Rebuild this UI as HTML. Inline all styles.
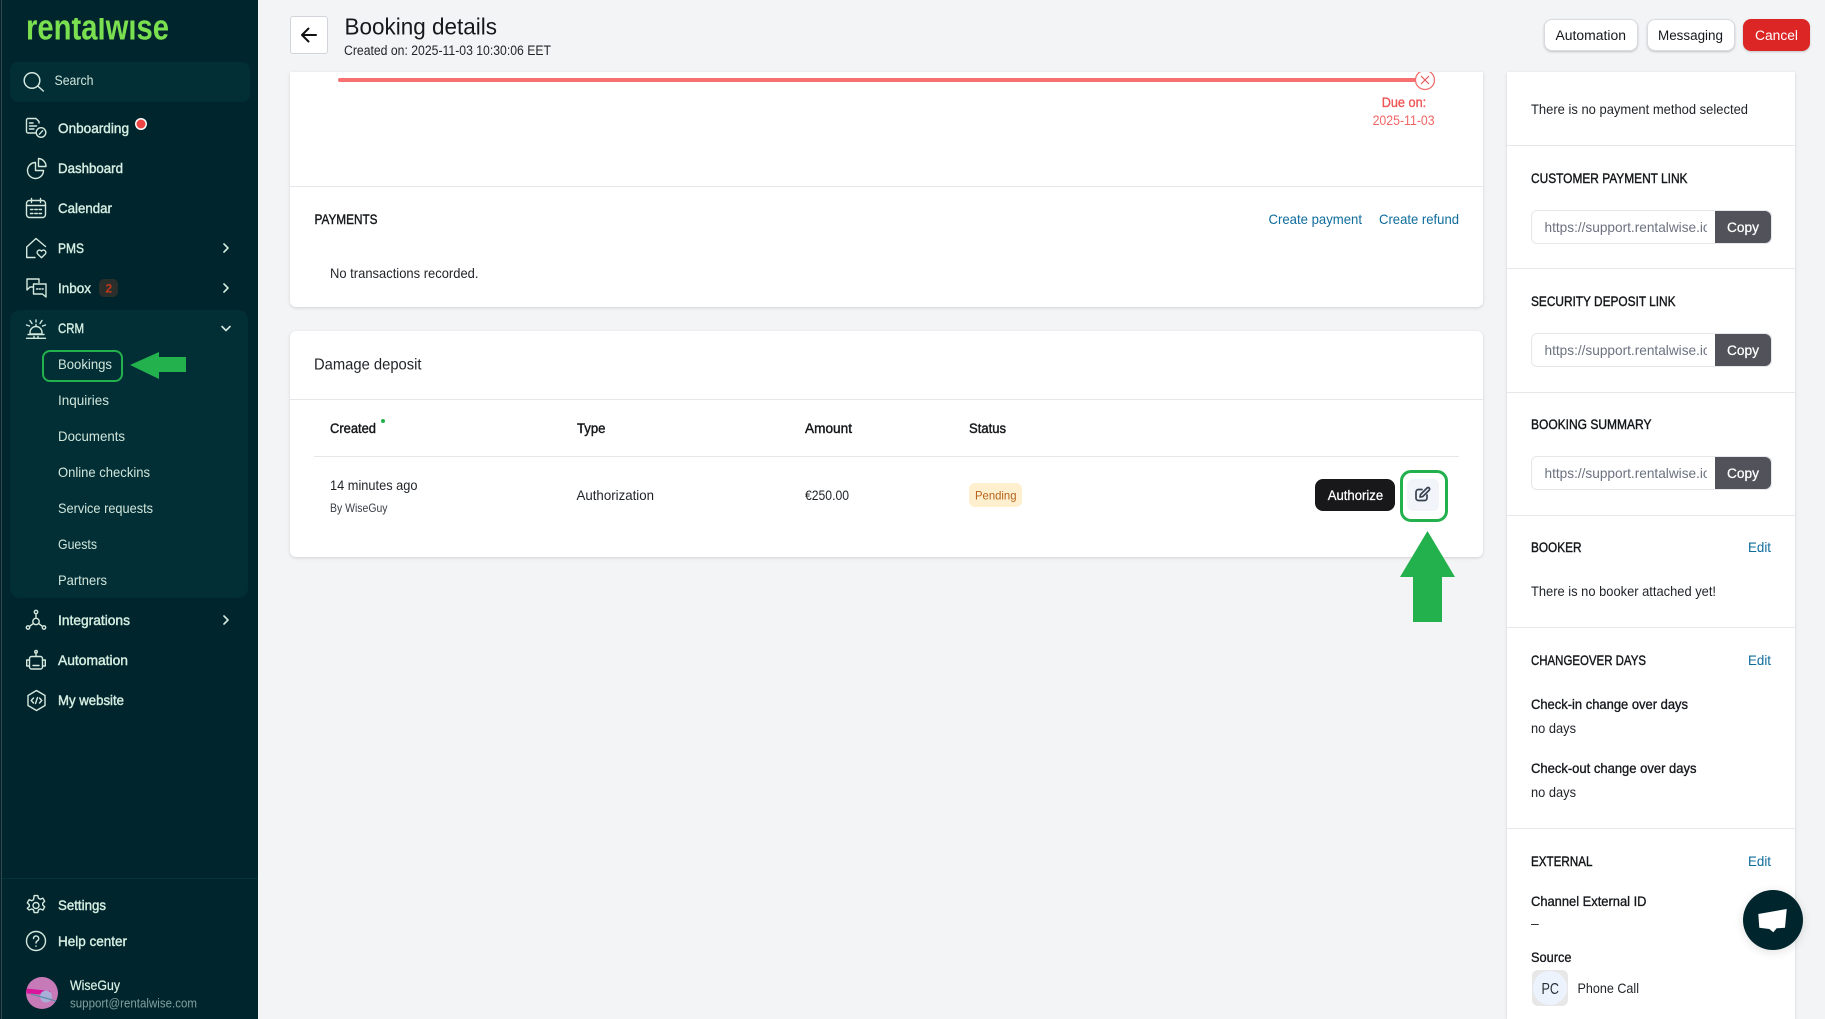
<!DOCTYPE html>
<html lang="en">
<head>
<meta charset="utf-8">
<title>Booking details</title>
<style>
html,body{margin:0;padding:0;width:1825px;height:1019px;overflow:hidden;background:#f3f4f6;font-family:"Liberation Sans",sans-serif}
div{position:absolute;box-sizing:border-box}
svg.layer{position:absolute;left:0;top:0}
text{font-family:"Liberation Sans",sans-serif}
.n{font-size:14px;fill:#d6efe2;stroke:#d6efe2;stroke-width:.4}
.s{font-size:14px;fill:#d0e6da}
.t{font-size:14px;fill:#1f2328}
.b{font-size:14px;fill:#15181c;stroke:#15181c;stroke-width:.35}
.h{font-size:13.5px;fill:#14171a;stroke:#14171a;stroke-width:.4}
.l{font-size:14px;fill:#0f6c9c}
.i{fill:none;stroke:#d5e8dd;stroke-width:1.4;stroke-linecap:round;stroke-linejoin:round}
.c{font-size:13.5px;fill:#15181c}
.w{font-size:13.5px;fill:#fff;stroke:#fff;stroke-width:.25}
</style>
</head>
<body>
<!-- sidebar -->
<div style="left:0;top:0;width:258px;height:1019px;background:#00252d"></div>
<div style="left:1px;top:0;width:1px;height:1019px;background:#34474d"></div>
<div style="left:10px;top:62px;width:240px;height:40px;background:#022e36;border-radius:8px"></div>
<div style="left:10px;top:310px;width:238px;height:288px;background:#022e36;border-radius:10px"></div>
<div style="left:2px;top:878px;width:256px;height:1px;background:#04343b"></div>
<div style="left:99px;top:279px;width:19px;height:18px;background:#2a2f2c;border-radius:5px"></div>

<!-- main card -->
<div style="left:290px;top:72px;width:1193px;height:235px;background:#fff;border-radius:0 0 6px 6px;box-shadow:0 1px 3px rgba(0,0,0,.14)"></div>
<div style="left:290px;top:186px;width:1193px;height:1px;background:#e5e7eb"></div>
<div style="left:338px;top:78px;width:1080px;height:4px;background:#f87171;border-radius:2px"></div>

<!-- deposit card -->
<div style="left:290px;top:331px;width:1193px;height:226px;background:#fff;border-radius:6px;box-shadow:0 1px 3px rgba(0,0,0,.14)"></div>
<div style="left:290px;top:399px;width:1193px;height:1px;background:#e5e7eb"></div>
<div style="left:314px;top:456px;width:1145px;height:1px;background:#e5e7eb"></div>
<div style="left:969px;top:483px;width:53px;height:24px;background:#fef0cf;border-radius:6px"></div>
<div style="left:1315px;top:479px;width:80px;height:32px;background:#18181b;border-radius:8px"></div>
<div style="left:1407px;top:479px;width:32px;height:32px;background:#f1f5f9;border-radius:6px"></div>
<div style="left:1400px;top:470px;width:48px;height:52px;border:3px solid #22b14c;border-radius:11px"></div>
<div style="left:42px;top:350px;width:81px;height:32px;border:2.5px solid #22b14c;border-radius:8px"></div>

<!-- right panel -->
<div style="left:1507px;top:72px;width:288px;height:947px;background:#fff;box-shadow:0 1px 3px rgba(0,0,0,.14)"></div>
<div style="left:1507px;top:145px;width:288px;height:1px;background:#e5e7eb"></div>
<div style="left:1507px;top:268px;width:288px;height:1px;background:#e5e7eb"></div>
<div style="left:1507px;top:392px;width:288px;height:1px;background:#e5e7eb"></div>
<div style="left:1507px;top:515px;width:288px;height:1px;background:#e5e7eb"></div>
<div style="left:1507px;top:627px;width:288px;height:1px;background:#e5e7eb"></div>
<div style="left:1507px;top:828px;width:288px;height:1px;background:#e5e7eb"></div>

<div style="left:1531px;top:210px;width:241px;height:34px;background:#fff;border:1px solid #e5e7eb;border-radius:6px"></div>
<div style="left:1715px;top:211px;width:56px;height:32px;background:#52525b;border-radius:0 6px 6px 0"></div>
<div style="left:1531px;top:333px;width:241px;height:34px;background:#fff;border:1px solid #e5e7eb;border-radius:6px"></div>
<div style="left:1715px;top:334px;width:56px;height:32px;background:#52525b;border-radius:0 6px 6px 0"></div>
<div style="left:1531px;top:456px;width:241px;height:34px;background:#fff;border:1px solid #e5e7eb;border-radius:6px"></div>
<div style="left:1715px;top:457px;width:56px;height:32px;background:#52525b;border-radius:0 6px 6px 0"></div>

<div style="left:1532px;top:970px;width:36px;height:36px;background:#e7e7e7;border-radius:6px"></div>
<div style="left:1533px;top:971px;width:34px;height:34px;background:#edf3fd;border-radius:50%"></div>

<!-- header -->
<div style="left:290px;top:16px;width:38px;height:38px;background:#fff;border:1px solid #d1d5db;border-radius:3px"></div>
<div style="left:1544px;top:19px;width:94px;height:32px;background:#fff;border:1px solid #d9dbe0;border-radius:8px;box-shadow:0 1px 2px rgba(0,0,0,.2)"></div>
<div style="left:1647px;top:19px;width:88px;height:32px;background:#fff;border:1px solid #d9dbe0;border-radius:8px;box-shadow:0 1px 2px rgba(0,0,0,.2)"></div>
<div style="left:1743px;top:19px;width:67px;height:32px;background:#dc2626;border-radius:8px;box-shadow:0 1px 2px rgba(0,0,0,.2)"></div>

<!-- chat -->
<div style="left:1743px;top:890px;width:60px;height:60px;background:#00252d;border-radius:50%;box-shadow:0 2px 10px rgba(0,0,0,.12)"></div>

<svg class="layer" width="1825" height="1019" viewBox="0 0 1825 1019" xmlns="http://www.w3.org/2000/svg">
<defs>
<clipPath id="u"><rect x="1540" y="200" width="167" height="300"/></clipPath>
<clipPath id="cc"><rect x="1400" y="72" width="50" height="30"/></clipPath>
<clipPath id="lg"><rect x="20" y="18" width="160" height="24"/></clipPath>
</defs>

<!-- logo -->
<g clip-path="url(#lg)"><text x="26" y="39.500" font-size="36" font-weight="700" fill="#7be050" textLength="143" lengthAdjust="spacingAndGlyphs">rentalwise</text></g>

<!-- search -->
<g class="i" style="stroke-width:1.5"><circle cx="32" cy="80.5" r="7.8"/><path d="M37.8 86l5.5 5"/></g>
<text class="s" x="54.5" y="85" textLength="39" lengthAdjust="spacingAndGlyphs">Search</text>

<!-- nav icons -->
<g class="i" transform="translate(26,118)"><path d="M13 5V3.5L10 .5H2A1.5 1.5 0 0 0 .5 2v11.5A1.5 1.5 0 0 0 2 15h7.5"/><path d="M3.5 5h3.5M3.5 8h7M3.5 11h4.5"/><circle cx="15" cy="14.5" r="4.8"/><path d="M13.4 16.2l3.2-3.4"/></g>
<g class="i" transform="translate(26,158)"><path d="M9.500 4.500A8 8 0 1 0 17.500 12.500H9.500Z"/><path d="M12.500 .5V8.500H20A8 8 0 0 0 12.500 .5Z"/></g>
<g class="i" transform="translate(26,198)"><rect x=".5" y="2.5" width="19" height="17" rx="3"/><path d="M5.5 .5v4M14.5 .5v4M.5 7.5h19M4.5 11.5h2.5M8.8 11.5h2.5M13 11.5h2.5M4.5 15.5h2.5M8.8 15.5h2.5M13 15.5h2.5"/></g>
<g class="i" transform="translate(26,238)"><path d="M9 19.500H.7V9L10 .5 19.500 8.500"/><path d="M15.500 19.700l-3.900-3.800a2.400 2.400 0 0 1 3.900-2.800 2.400 2.400 0 0 1 3.900 2.800z"/></g>
<g class="i" transform="translate(26,278)"><path d="M13 4.500V1H1v11l3-3h3.500"/><path d="M7.500 6H20v13l-3.500-3H7.500Z"/><path d="M10.500 11h1.200M13.200 11h1.200M16 11h1.200"/></g>
<g class="i" transform="translate(26,320)"><path d="M4 14V12.500a6 6 0 0 1 12 0V14Z"/><path d="M2 14.500h16M.5 18.300h19M8 16.500v1.500M12 16.500v1.500M10 6V4.500M4 .5l2 3M10 0v2M16 .5l-2 3M.5 5l3 1M19.500 5l-3 1"/></g>
<g class="i" transform="translate(26,610)"><circle cx="10" cy="11.500" r="3.200"/><circle cx="10" cy="2" r="1.700"/><circle cx="2" cy="17.500" r="1.700"/><circle cx="18" cy="17.500" r="1.700"/><path d="M10 3.700v4.600M7.400 13.400l-3.900 3M12.600 13.400l3.900 3"/></g>
<g class="i" transform="translate(26,650)"><rect x="3.500" y="6.500" width="13" height="12.500" rx="2"/><path d="M3.500 10H.7v6h2.800M16.500 10h2.800v6h-2.800M7 15.500h6M10 6.500V3"/><circle cx="10" cy="1.800" r="1.300"/></g>
<g class="i" transform="translate(27,690)"><path d="M9.500 .5L18 5.500V15.500L9.500 20.500 1 15.500V5.500Z"/><path d="M6.500 8l-2.300 2.500L6.500 13M12.500 8l2.300 2.500L12.500 13M10.500 7.500l-2 6"/></g>
<g class="i" transform="translate(26,895)"><path d="M8.200 .6h3.600l.7 2.700 1.800.9 2.600-1 1.800 3.100-2 1.900v1.800l2 1.900-1.800 3.100-2.600-1-1.800.9-.7 2.700H8.200l-.7-2.700-1.800-.9-2.600 1L1.300 13.400l2-1.900V9.700l-2-1.900L3.100 4.700l2.600 1 1.800-.9Z"/><circle cx="10" cy="10.500" r="3"/></g>
<g class="i" transform="translate(26,931)"><circle cx="10" cy="10" r="9.500"/><path d="M7.500 7.500a2.600 2.600 0 1 1 3.900 2.300c-.9.500-1.400 1-1.400 2.200M10 15v.3"/></g>

<!-- chevrons -->
<g fill="none" stroke="#d5e8dd" stroke-width="1.600" stroke-linecap="round" stroke-linejoin="round">
<path d="M224 244l4 4-4 4M224 284l4 4-4 4M224 616l4 4-4 4M222 326.500l4 4 4-4"/>
</g>

<!-- nav -->
<text class="n" x="58" y="133" textLength="71" lengthAdjust="spacingAndGlyphs">Onboarding</text>
<circle cx="141" cy="124" r="6" fill="#fff"/><circle cx="141" cy="124" r="4.500" fill="#ef4444"/>
<text class="n" x="58" y="173" textLength="65" lengthAdjust="spacingAndGlyphs">Dashboard</text>
<text class="n" x="58" y="213" textLength="54" lengthAdjust="spacingAndGlyphs">Calendar</text>
<text class="n" x="58" y="253" textLength="26" lengthAdjust="spacingAndGlyphs">PMS</text>
<text class="n" x="58" y="293" textLength="33" lengthAdjust="spacingAndGlyphs">Inbox</text>
<text x="105.500" y="292.500" font-size="12" font-weight="700" fill="#c2381c">2</text>
<text class="n" x="58" y="333" textLength="26" lengthAdjust="spacingAndGlyphs">CRM</text>
<text class="s" x="58" y="369" textLength="54" lengthAdjust="spacingAndGlyphs">Bookings</text>
<text class="s" x="58" y="405" textLength="51" lengthAdjust="spacingAndGlyphs">Inquiries</text>
<text class="s" x="58" y="441" textLength="67" lengthAdjust="spacingAndGlyphs">Documents</text>
<text class="s" x="58" y="477" textLength="92" lengthAdjust="spacingAndGlyphs">Online checkins</text>
<text class="s" x="58" y="513" textLength="95" lengthAdjust="spacingAndGlyphs">Service requests</text>
<text class="s" x="58" y="549" textLength="39" lengthAdjust="spacingAndGlyphs">Guests</text>
<text class="s" x="58" y="585" textLength="49" lengthAdjust="spacingAndGlyphs">Partners</text>
<text class="n" x="58" y="625" textLength="72" lengthAdjust="spacingAndGlyphs">Integrations</text>
<text class="n" x="58" y="665" textLength="70" lengthAdjust="spacingAndGlyphs">Automation</text>
<text class="n" x="58" y="705" textLength="66" lengthAdjust="spacingAndGlyphs">My website</text>
<text class="n" x="58" y="910" textLength="48" lengthAdjust="spacingAndGlyphs">Settings</text>
<text class="n" x="58" y="946" textLength="69" lengthAdjust="spacingAndGlyphs">Help center</text>

<!-- avatar -->
<circle cx="42" cy="993" r="16" fill="#c77ab8"/>
<path d="M26.500 988.500L50 991v4l-23.500-1.500Z" fill="#d9139a"/>
<circle cx="46" cy="996.500" r="6" fill="#a9aed8"/>
<path d="M31 994l25 7" stroke="#5e8ca6" stroke-width="1.200"/>
<text x="70" y="990" font-size="14" fill="#d9f0e3" stroke="#d9f0e3" stroke-width=".2" textLength="50" lengthAdjust="spacingAndGlyphs">WiseGuy</text>
<text x="70" y="1007.500" font-size="12.500" fill="#80a09d" textLength="127" lengthAdjust="spacingAndGlyphs">support@rentalwise.com</text>

<!-- green arrows -->
<path d="M130 365l29-13v5h27v15h-27v7Z" fill="#22b14c"/>
<path d="M1427.500 531L1455 577h-13v45h-29v-45h-13Z" fill="#22b14c"/>

<!-- header -->
<path d="M302 35h14M308.500 28.500L302 35l6.500 6.500" fill="none" stroke="#111" stroke-width="2" stroke-linecap="round" stroke-linejoin="round"/>
<text x="344.500" y="34.500" font-size="23.500" fill="#15181c" textLength="152.500" lengthAdjust="spacingAndGlyphs">Booking details</text>
<text x="344" y="55" font-size="13.500" fill="#1f2328" textLength="207" lengthAdjust="spacingAndGlyphs">Created on: 2025-11-03 10:30:06 EET</text>
<text class="c" x="1555.500" y="40" textLength="70.500" lengthAdjust="spacingAndGlyphs">Automation</text>
<text class="c" x="1658" y="40" textLength="65" lengthAdjust="spacingAndGlyphs">Messaging</text>
<text class="c" style="fill:#fff" x="1755" y="40" textLength="43" lengthAdjust="spacingAndGlyphs">Cancel</text>

<!-- main card -->
<g clip-path="url(#cc)"><circle cx="1425" cy="80" r="9.500" fill="#fff" stroke="#f26d6d" stroke-width="1.300"/><path d="M1421 76l8 8M1429 76l-8 8" stroke="#e85a5a" stroke-width="1.200"/></g>
<text x="1381.700" y="107" font-size="13.500" fill="#ef5555" stroke="#ef5555" stroke-width=".35" textLength="44.500" lengthAdjust="spacingAndGlyphs">Due on:</text>
<text x="1372.600" y="125" font-size="13.500" fill="#f26565" textLength="62" lengthAdjust="spacingAndGlyphs">2025-11-03</text>
<text class="h" x="314.500" y="224" textLength="63" lengthAdjust="spacingAndGlyphs">PAYMENTS</text>
<text class="l" x="1268.500" y="224" textLength="93.500" lengthAdjust="spacingAndGlyphs">Create payment</text>
<text class="l" x="1379" y="224" textLength="80" lengthAdjust="spacingAndGlyphs">Create refund</text>
<text class="t" x="330" y="278" textLength="148.500" lengthAdjust="spacingAndGlyphs">No transactions recorded.</text>

<!-- deposit -->
<text x="314" y="369.500" font-size="16" fill="#1f2328" textLength="107.500" lengthAdjust="spacingAndGlyphs">Damage deposit</text>
<text class="h" x="330" y="433" textLength="46" lengthAdjust="spacingAndGlyphs">Created</text>
<circle cx="383" cy="421" r="2" fill="#22b14c"/>
<text class="h" x="577" y="433" textLength="28.500" lengthAdjust="spacingAndGlyphs">Type</text>
<text class="h" x="805" y="433" textLength="47" lengthAdjust="spacingAndGlyphs">Amount</text>
<text class="h" x="969" y="433" textLength="37" lengthAdjust="spacingAndGlyphs">Status</text>
<text class="t" x="330" y="490" textLength="87.500" lengthAdjust="spacingAndGlyphs">14 minutes ago</text>
<text x="330" y="512" font-size="12" fill="#3a3f45" textLength="57.500" lengthAdjust="spacingAndGlyphs">By WiseGuy</text>
<text class="t" x="576.500" y="500" textLength="77.500" lengthAdjust="spacingAndGlyphs">Authorization</text>
<text class="t" x="805" y="500" textLength="44" lengthAdjust="spacingAndGlyphs">€250.00</text>
<text x="975" y="499.500" font-size="12" fill="#b4631b" textLength="41.500" lengthAdjust="spacingAndGlyphs">Pending</text>
<text class="w" x="1327.700" y="500" textLength="55.500" lengthAdjust="spacingAndGlyphs">Authorize</text>
<g transform="translate(-1,-1)" fill="none" stroke="#374151" stroke-width="1.700" stroke-linecap="round" stroke-linejoin="round"><path d="M1423 490.500h-3.500a2.500 2.500 0 0 0-2.500 2.500v6a2.500 2.500 0 0 0 2.500 2.500h6a2.500 2.500 0 0 0 2.500-2.500V496"/><path d="M1421.500 495.500l6.500-6.500a1.500 1.500 0 0 1 2.200 2.100l-6.500 6.500-2.700.5Z"/></g>

<!-- right panel -->
<text class="t" x="1531" y="114" textLength="217" lengthAdjust="spacingAndGlyphs">There is no payment method selected</text>
<text class="h" x="1531" y="183" textLength="156.500" lengthAdjust="spacingAndGlyphs">CUSTOMER PAYMENT LINK</text>
<g clip-path="url(#u)" font-size="14" fill="#6b7280">
<text x="1544.500" y="232" textLength="166" lengthAdjust="spacingAndGlyphs">https://support.rentalwise.io</text>
<text x="1544.500" y="355" textLength="166" lengthAdjust="spacingAndGlyphs">https://support.rentalwise.io</text>
<text x="1544.500" y="478" textLength="166" lengthAdjust="spacingAndGlyphs">https://support.rentalwise.io</text>
</g>
<text class="w" x="1727" y="232" textLength="32" lengthAdjust="spacingAndGlyphs">Copy</text>
<text class="w" x="1727" y="355" textLength="32" lengthAdjust="spacingAndGlyphs">Copy</text>
<text class="w" x="1727" y="478" textLength="32" lengthAdjust="spacingAndGlyphs">Copy</text>
<text class="h" x="1531" y="306" textLength="144.500" lengthAdjust="spacingAndGlyphs">SECURITY DEPOSIT LINK</text>
<text class="h" x="1531" y="429" textLength="120.500" lengthAdjust="spacingAndGlyphs">BOOKING SUMMARY</text>
<text class="h" x="1531" y="552" textLength="50.500" lengthAdjust="spacingAndGlyphs">BOOKER</text>
<text class="l" x="1748" y="552" textLength="23" lengthAdjust="spacingAndGlyphs">Edit</text>
<text class="t" x="1531" y="596" textLength="185" lengthAdjust="spacingAndGlyphs">There is no booker attached yet!</text>
<text class="h" x="1531" y="665" textLength="115" lengthAdjust="spacingAndGlyphs">CHANGEOVER DAYS</text>
<text class="l" x="1748" y="665" textLength="23" lengthAdjust="spacingAndGlyphs">Edit</text>
<text class="b" x="1531" y="709" textLength="157" lengthAdjust="spacingAndGlyphs">Check-in change over days</text>
<text class="t" x="1531" y="733" textLength="45" lengthAdjust="spacingAndGlyphs">no days</text>
<text class="b" x="1531" y="773" textLength="165.500" lengthAdjust="spacingAndGlyphs">Check-out change over days</text>
<text class="t" x="1531" y="797" textLength="45" lengthAdjust="spacingAndGlyphs">no days</text>
<text class="h" x="1531" y="866" textLength="61.500" lengthAdjust="spacingAndGlyphs">EXTERNAL</text>
<text class="l" x="1748" y="866" textLength="23" lengthAdjust="spacingAndGlyphs">Edit</text>
<text class="b" x="1531" y="906" textLength="115.500" lengthAdjust="spacingAndGlyphs">Channel External ID</text>
<text class="t" x="1531" y="928">–</text>
<text class="b" x="1531" y="962" textLength="40.500" lengthAdjust="spacingAndGlyphs">Source</text>
<text x="1541.500" y="994" font-size="16" fill="#2b2f35" textLength="17.500" lengthAdjust="spacingAndGlyphs">PC</text>
<text class="t" x="1577.500" y="993" textLength="61.500" lengthAdjust="spacingAndGlyphs">Phone Call</text>

<!-- chat bubble -->
<path d="M1758.300 914L1786.700 909L1785 927.700L1776.700 928.300L1773.300 932.300L1769.300 929L1759.300 927.700Z" fill="#fff"/>
</svg>
</body>
</html>
